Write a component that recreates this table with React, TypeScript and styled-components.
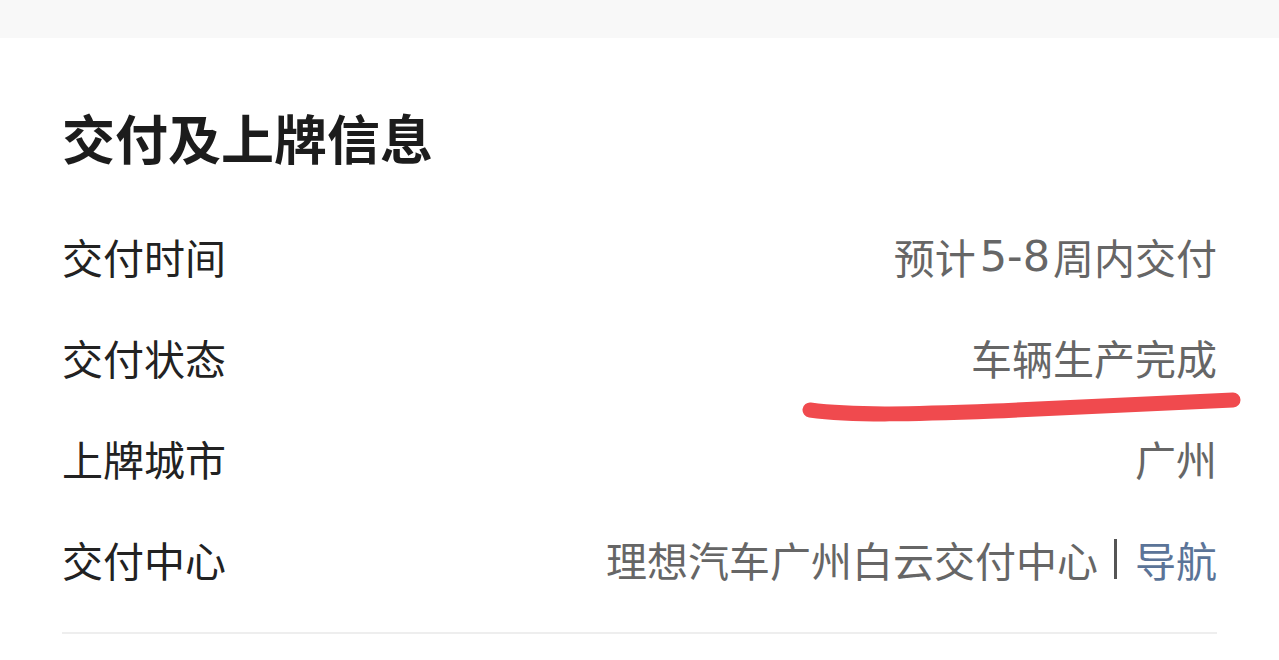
import React from 'react';
import styled, { createGlobalStyle } from 'styled-components';

const fontStack = '"Noto Sans CJK SC", "Noto Sans", sans-serif';
const labelColor = '#222222';
const valueColor = '#666666';
const linkColor = '#5b7498';

const GlobalStyle = createGlobalStyle`
  html, body {
    margin: 0;
    padding: 0;
    background: #ffffff;
    font-family: ${fontStack};
  }
`;

const TopBand = styled.div`
  height: 38px;
  background: #f8f8f8;
`;

const Section = styled.section`
  padding: 67px 62px 0;
`;

const Title = styled.h2`
  margin: 0 0 41px;
  font-size: 53px;
  line-height: 64px;
  font-weight: 700;
  color: #1c1c1c;
`;

const Row = styled.div`
  position: relative;
  box-sizing: border-box;
  height: 101px;
  padding-bottom: 10px;
  display: flex;
  align-items: center;
  justify-content: space-between;
  font-size: 41px;
`;

const Label = styled.span`
  color: ${labelColor};
`;

const Value = styled.span`
  color: ${valueColor};
  display: flex;
  align-items: center;
`;

// the digits in the reference come from a wider latin face
const Num = styled.span`
  padding: 0 3px 0 4px;
  font-family: 'DejaVu Sans', ${fontStack};
  font-size: 43px;
`;

const Separator = styled.span`
  display: inline-block;
  width: 3px;
  height: 40px;
  margin: 0 18px 0 16px;
  background: #555555;
`;

const NavLink = styled.a`
  color: ${linkColor};
  text-decoration: none;
`;

const Scribble = styled.svg`
  position: absolute;
  right: -30px;
  top: 78px;
  width: 452px;
  height: 40px;
  pointer-events: none;
`;

const Divider = styled.div`
  height: 2px;
  margin-top: 18px;
  background: #eeeeee;
`;

const rows: { label: string; value: React.ReactNode; marked?: boolean }[] = [
  {
    label: '交付时间',
    value: (
      <>
        预计<Num>5-8</Num>周内交付
      </>
    ),
  },
  { label: '交付状态', value: '车辆生产完成', marked: true },
  { label: '上牌城市', value: '广州' },
];

export default function App() {
  return (
    <>
      <GlobalStyle />
      <TopBand />
      <Section>
        <Title>交付及上牌信息</Title>
        {rows.map(r => (
          <Row key={r.label}>
            <Label>{r.label}</Label>
            <Value>{r.value}</Value>
            {r.marked && (
              // hand drawn red mark under the status
              <Scribble viewBox="0 0 452 40">
                <path
                  d="M 15 21 C 60 27, 120 25, 200 22 S 360 14, 438 11"
                  fill="none"
                  stroke="#f04a4e"
                  strokeWidth="15"
                  strokeLinecap="round"
                />
              </Scribble>
            )}
          </Row>
        ))}
        <Row>
          <Label>交付中心</Label>
          <Value>
            理想汽车广州白云交付中心
            <Separator />
            <NavLink>导航</NavLink>
          </Value>
        </Row>
        <Divider />
      </Section>
    </>
  );
}
